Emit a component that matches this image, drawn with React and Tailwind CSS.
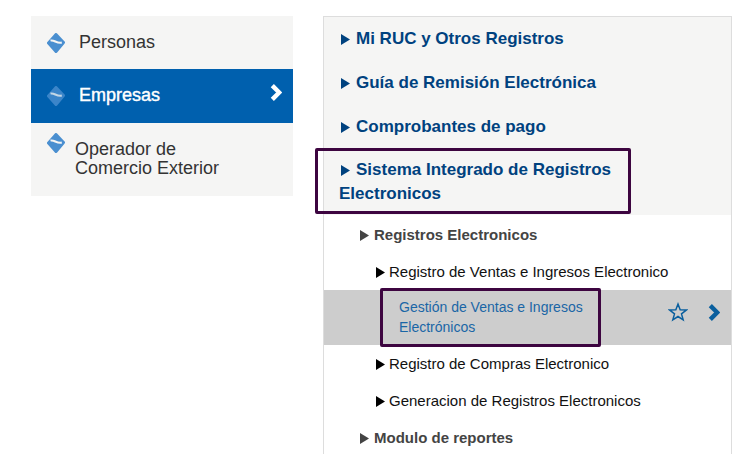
import React from "react";

const Logo = ({ className }) => (
  <svg viewBox="0 0 18 20" className={className}>
    <path d="M9 1.5 L16.5 9.5 L9 18.5 L1.5 10 Z" fill="currentColor" stroke="currentColor" strokeWidth="3" strokeLinejoin="round" />
    <path d="M3.5 7.5 C7.5 6.5 9.5 10.8 14.8 9.6" stroke="#f5f5f4" strokeWidth="2" fill="none" />
  </svg>
);

const Arrow = ({ className }) => (
  <svg viewBox="0 0 9 11" className={`inline-block w-[9px] h-[11px] ${className}`}>
    <path d="M0 0 L9 5.5 L0 11 Z" fill="currentColor" />
  </svg>
);

const Chevron = ({ className }) => (
  <svg viewBox="0 0 12 16" className={className}>
    <path d="M3 1.5 L9.5 8 L3 14.5" stroke="currentColor" strokeWidth="4.2" fill="none" />
  </svg>
);

const headings = ["Mi RUC y Otros Registros", "Guía de Remisión Electrónica", "Comprobantes de pago"];

const SubItem = ({ label, className }) => (
  <div className={`flex items-center gap-[4px] pl-[52px] text-[15px] text-[#111] ${className}`}>
    <Arrow className="text-black" />
    <span>{label}</span>
  </div>
);

export default function App() {
  return (
    <div
      className="relative h-[454px] w-[741px] overflow-hidden bg-white flex items-start pl-[31px] pt-4 gap-[30px]"
      style={{ fontFamily: '"Liberation Sans", Arial, sans-serif' }}
    >
      {/* Left menu */}
      <div className="w-[262px] bg-[#f5f5f4] text-[#333] text-[18px]">
        <div className="h-[53px] flex items-center pl-[16px] gap-[14px]">
          <Logo className="w-[18px] h-[20px] text-[#4a8fd0]" />
          <span>Personas</span>
        </div>
        <div className="h-[54px] flex items-center pl-[16px] gap-[14px] bg-[#0060ae] text-white relative">
          <Logo className="w-[18px] h-[20px] text-[#4a8fd0] opacity-80" />
          <span className="-mt-[2px] [-webkit-text-stroke:0.4px_white]">Empresas</span>
          <Chevron className="absolute right-[11px] top-[15px] w-[13px] h-[17px] text-white" />
        </div>
        <div className="h-[73px] flex items-start pl-[16px] pt-[10px] gap-[11px] leading-[19px]">
          <Logo className="w-[18px] h-[20px] text-[#4a8fd0] shrink-0" />
          <span className="pt-[7px] -ml-[1px]">
            Operador de
            <br />
            Comercio Exterior
          </span>
        </div>
      </div>

      {/* Right menu */}
      <div className="w-[409px] h-[480px] border border-[#ddd] border-b-0">
        <div className="bg-[#f5f5f4] h-[198px] pl-[15px] text-[17px] font-bold text-[#00427f]">
          {headings.map((h) => (
            <div key={h} className="h-[44px] flex items-center gap-[6px] pl-[2px]">
              <Arrow />
              <span>{h}</span>
            </div>
          ))}
          <div className="pt-[9px] leading-[24px] w-[290px]">
            <Arrow className="ml-[2px] mr-[6px]" />
            Sistema Integrado de Registros Electronicos
          </div>
        </div>

        <div className="h-[40px] flex items-center gap-[5px] pl-[36px] text-[15px] font-bold text-[#444]">
          <Arrow />
          <span>Registros Electronicos</span>
        </div>
        <SubItem label="Registro de Ventas e Ingresos Electronico" className="h-[35px]" />
        <div className="h-[55px] bg-[#cdcdcd] flex items-center pl-[75px] pr-[12px] text-[14px] leading-[20px] text-[#1a66a6]">
          <span className="w-[220px] -mt-[2px]">
            Gestión de Ventas e Ingresos
            <br />
            Electrónicos
          </span>
          <svg viewBox="0 0 24 24" className="ml-auto mr-[19px] mb-[11px] w-[20px] h-[20px] text-[#0a5f9e]">
            <path
              d="M12 2.5 L14.6 9.2 L22 9.6 L16.2 14.2 L18.2 21.4 L12 17.4 L5.8 21.4 L7.8 14.2 L2 9.6 L9.4 9.2 Z"
              stroke="currentColor"
              strokeWidth="1.8"
              fill="none"
            />
          </svg>
          <Chevron className="w-[13px] h-[17px] mb-[10px] -mr-[1px] text-[#0a5f9e]" />
        </div>
        <SubItem label="Registro de Compras Electronico" className="h-[38px]" />
        <SubItem label="Generacion de Registros Electronicos" className="h-[37px]" />
        <div className="h-[37px] flex items-center gap-[5px] pl-[36px] text-[15px] font-bold text-[#444]">
          <Arrow />
          <span>Modulo de reportes</span>
        </div>
      </div>

      {/* Highlight boxes */}
      <div className="absolute left-[315px] top-[148px] w-[316px] h-[66px] border-[3px] border-[#3d0540] rounded-[2px]" />
      <div className="absolute left-[380px] top-[288px] w-[221px] h-[59px] border-[3px] border-[#3d0540] rounded-[2px]" />
    </div>
  );
}
